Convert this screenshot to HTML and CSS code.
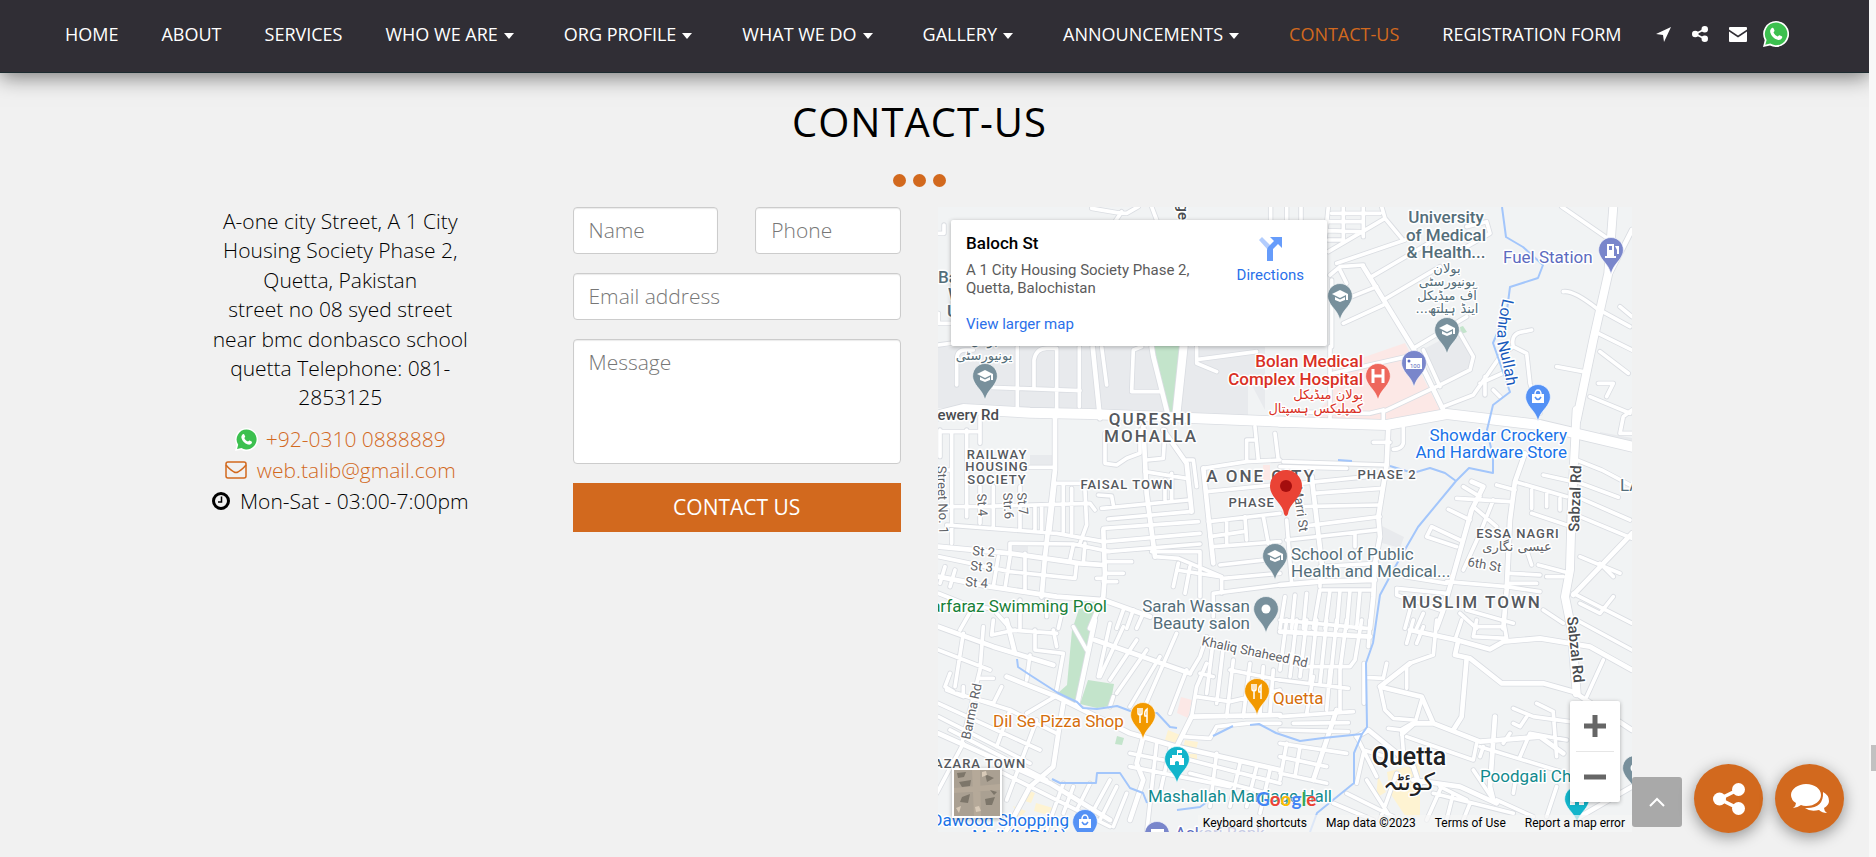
FILE: index.html
```html
<!DOCTYPE html>
<html lang="en">
<head>
<meta charset="utf-8">
<title>Contact-Us</title>
<link rel="stylesheet" href="styles.css">
</head>
<body>
<svg class="sprite" aria-hidden="true">
  <symbol id="whatsapp" viewBox="0 0 26 26">
    <path d="M13 0a13 13 0 1 1-6 24.500L0 26l1.700-6.800A13 13 0 0 1 13 0z" fill="#fff"/>
    <path d="M13 1.600a11.300 11.300 0 1 1-5.700 21l-5 1.200 1.300-4.900A11.300 11.300 0 0 1 13 1.600z" fill="#3cc04f"/>
    <path d="M8.800 7c.6-.5 1.400-.4 1.700.3l1 2.300c.2.600-.7 1.300-1 1.800.9 1.900 2.300 3.200 4.200 4 .6-.4 1.200-1.500 1.800-1.200l2.200 1.100c.7.300.6 1.100.3 1.700-.8 1.700-2.700 2.200-4.400 1.700-3.800-1.200-6.300-3.800-7.300-7.300C6.800 9.700 7.600 7.900 8.800 7z" fill="#fff"/>
  </symbol>
  <symbol id="share" viewBox="0 0 32 32">
    <path d="M25.500 6.500L6.500 16l19 9.500" fill="none" stroke="currentColor" stroke-width="3.600"/>
    <circle cx="25.500" cy="6.500" r="6.500" fill="currentColor"/><circle cx="6.500" cy="16" r="6.500" fill="currentColor"/><circle cx="25.500" cy="25.500" r="6.500" fill="currentColor"/>
  </symbol>
  <symbol id="cap" viewBox="-12 -12 24 24"><path d="M0-6L-8-2 0 2 6-1V4H8V-2zM-5 1V4L0 6 5 4V1L0 3.500z" fill="#fff"/></symbol>
  <symbol id="fork" viewBox="-12 -12 24 24"><path d="M-5-7V-2Q-5 0-3 0V8M-3-7V0M-1-7V-2Q-1 0-3 0M4 8V-6Q1-4 2 1H4" fill="none" stroke="#fff" stroke-width="1.500"/></symbol>
  <symbol id="bag" viewBox="-12 -12 24 24"><path d="M-6-3H6V6H-6z" fill="#fff"/><path d="M-3-3A3 4 0 0 1 3-3" fill="none" stroke="#fff" stroke-width="1.500"/><path d="M-3 0Q0 5 3 0" fill="none" stroke="#5491f5" stroke-width="1.500"/></symbol>
  <symbol id="fort" viewBox="-12 -12 24 24"><path d="M0-9H5V-6H1V-4H5V-1H7V6H2V3Q0 1-2 3V6H-7V-1H-5V-4H0z" fill="#fff"/></symbol>
  <symbol id="pin" viewBox="-14 -14 28 42"><path d="M0-12.500A12.500 12.500 0 0 1 12 3C9 12 3 13 0 24-3 13-9 12-12 3A12.500 12.500 0 0 1 0-12.500z" fill="currentColor" stroke="#fff" stroke-opacity=".6"/></symbol>
</svg>

<header class="topbar">
  <nav class="nav" aria-label="Main">
    <a href="#home">HOME</a>
    <a href="#about">ABOUT</a>
    <a href="#services">SERVICES</a>
    <a class="drop" href="#who">WHO WE ARE</a>
    <a class="drop" href="#profile">ORG PROFILE</a>
    <a class="drop" href="#what">WHAT WE DO</a>
    <a class="drop" href="#gallery">GALLERY</a>
    <a class="drop" href="#news">ANNOUNCEMENTS</a>
    <a class="active" href="#contact">CONTACT-US</a>
    <a href="#register">REGISTRATION FORM</a>
  </nav>
  <div class="quick">
    <a href="#map" aria-label="Location"><svg width="15" height="15" viewBox="0 0 15 15"><path d="M15 0L8 15 7 8 0 7z" fill="currentColor"/></svg></a>
    <a href="#share" aria-label="Share"><svg width="16" height="16"><use href="#share"/></svg></a>
    <a href="#mail" aria-label="Email"><svg width="18" height="15" viewBox="0 0 18 15"><path d="M1 0H17Q18 0 18 1V2.500L9 8.500 0 2.500V1Q0 0 1 0zM0 4.500L9 10.500 18 4.500V14Q18 15 17 15H1Q0 15 0 14z" fill="currentColor"/></svg></a>
    <a href="#wa" aria-label="WhatsApp"><svg width="26" height="26"><use href="#whatsapp"/></svg></a>
  </div>
</header>

<main class="contact" id="contact">
  <h1>CONTACT-US</h1>
  <div class="dots"><i></i><i></i><i></i></div>
  <div class="columns">
    <section class="details">
      <p>A-one city Street, A 1 City Housing Society Phase 2, Quetta, Pakistan<br>street no 08 syed street near bmc donbasco school quetta Telephone: 081-2853125</p>
      <ul>
        <li class="phone"><svg width="23" height="23"><use href="#whatsapp"/></svg><a href="#tel">+92-0310 0888889</a></li>
        <li class="mail"><svg width="22" height="18" viewBox="0 0 22 18"><rect x="1" y="1" width="20" height="16" rx="2" fill="none" stroke="currentColor" stroke-width="1.500"/><path d="M1 4Q3 7 9 11 11 12 13 11 19 7 21 4" fill="none" stroke="currentColor" stroke-width="1.500"/></svg><a href="#mail">web.talib@gmail.com</a></li>
        <li class="hours"><svg width="18" height="18" viewBox="0 0 18 18"><circle cx="9" cy="9" r="7.500" fill="none" stroke="currentColor" stroke-width="3"/><path d="M9.500 4.500V10H6" fill="none" stroke="currentColor" stroke-width="1.500"/></svg><span>Mon-Sat - 03:00-7:00pm</span></li>
      </ul>
    </section>

    <form class="form">
      <input type="text" placeholder="Name" aria-label="Name">
      <input type="tel" placeholder="Phone" aria-label="Phone">
      <input class="wide" type="email" placeholder="Email address" aria-label="Email address">
      <textarea class="wide" placeholder="Message" aria-label="Message"></textarea>
      <button class="wide" type="button">CONTACT US</button>
    </form>

    <section class="map" id="map" aria-label="Map">
      <svg class="canvas" viewBox="938 207 694 625">
        <defs>
          <g id="roads">
            <g transform="translate(930 200) scale(.3333)">
              <path class="r1" d="M485 25L560 38 590 40 625 20M575 35L545 80M665 20L680 60M1022 20V60M25 100H42V75M25 340V370H65M25 435L100 425M80 555V480Q80 450 105 450H130M262 440V630M312 560V480Q318 445 350 445H380V630M180 562L450 572M448 440V620M515 440L530 555M635 440L610 450 605 575H695M800 440V490L860 515M805 478L980 455"/>
              <path class="r2" d="M488 440L510 655M665 440L670 470 715 650"/>
              <path class="r3" d="M762 430L738 655"/>
            </g>
            <g transform="translate(1280 200) scale(.3333)">
              <path class="r1" d="M20 20V60M63 20V60M145 20L135 120M190 20V125M250 20V110M155 40H300M145 65H250M140 92L240 95M145 120H190M145 155L315 55 305 20M315 55L365 115M170 190L375 120M150 225L180 200 250 195M275 230L480 110M310 300L480 200M190 370L310 315M215 290L290 260M180 210L200 250M155 440V240M150 440V660M400 445L560 350M380 470L160 520M430 450L480 560M470 560L570 510 580 470 540 400M310 635L490 550M310 635V660M0 635L270 640 310 630M490 620L580 585 660 470 700 440 740 460 750 550 780 640M700 440Q690 400 730 395L755 390M690 510L600 550M615 585V530M640 570L660 590M560 80L620 65 630 100 560 140M845 20L990 120M850 275Q880 270 950 325L1050 380M1020 320L1056 350M955 400L1056 450M960 455L1045 520M830 500L910 515M955 550H1000L980 590M930 590L1050 640"/>
              <path class="r2" d="M250 200L400 445 490 630M1056 90L990 220"/>
              <path class="r3" d="M1000 20L985 220 940 420 890 660"/>
            </g>
            <g transform="translate(930 410) scale(.3333)">
              <path class="r1" d="M30 65H150V20M65 65V400M110 60V320M30 60V140M25 180H60M150 40V100M45 290H140L480 280 495 300M50 345L380 370 520 395M150 230V340M190 230V350M270 230V360M315 290V360M335 290V365M300 172H370M375 220H450M375 220L360 360M400 225V365M425 235V370M465 240L470 345 450 400M240 430V400L430 402 540 425M205 440L190 530M25 440L240 485 435 505 440 460M240 440L225 535M45 470L30 520M75 480L60 530M285 430V545M430 405L420 450M465 400L460 460 520 465M520 355L805 335M525 395L810 370M530 425L810 402M535 327L780 305M515 295L775 270M665 425L810 425V560M675 440L745 445 875 500M645 185L770 205M650 150L700 145 705 60M525 70V160L560 165 590 145 630 130V60M770 150L790 150 800 230M505 255L545 258 550 285M705 210V270M725 190V270M525 455H605M525 490H580M500 505H520M520 515H560M745 460L730 530M780 470L765 550M740 480L870 500M870 465L1050 445M880 505L1050 490M850 550L1050 525M875 500V550M850 550V620M820 175L950 155 1050 150M830 245L1030 225M835 335L1050 310M840 380L940 365M850 410L1050 395M890 330V400M945 320L950 390M1000 320L1015 400M975 50L985 150M950 150V90H975M1035 70L1045 150M580 600L560 655M610 600L590 655M640 610L620 655M25 550L100 580 200 600 360 580M130 590L90 660M200 610L240 655M270 570V655M350 620V570M385 655L400 590"/>
              <path class="r2" d="M375 20V180L345 440 335 560M25 410L240 430 450 460 520 465M25 500L180 530 380 560 520 570 660 620M520 360L525 490 520 560 480 655M640 50L650 250 675 440M700 60L770 160 785 305M820 175L850 460"/>
              <path class="r4" d="M-10 25L100 -3 300 8 480 12 1060 35"/>
            </g>
            <g transform="translate(1280 410) scale(.3333)">
              <path class="r1" d="M10 155L320 165M0 170L200 175M60 220L310 195M100 250L305 235M60 290L300 285M60 350L300 320M20 390L290 360M225 370V410M120 470L290 460M370 50V100Q365 118 340 118M280 97H330M120 540H280M120 540L100 655M150 540L135 655M180 540L170 655M210 540L200 655M240 540L230 655M120 500V530M20 330L35 520M15 560L0 655M45 555L35 655M80 550L70 655M0 630L260 655M705 215L860 260M650 225L705 240M755 240V295M800 250V290M840 265V300M790 195L880 215M755 310L860 345M890 150L965 180 1050 225M890 215L1015 262M890 260L1050 330M900 320L1056 385M550 230L600 260M530 265L690 275M505 298L570 330M580 290L650 350M540 390L455 350 440 380 530 410M640 270L600 370 550 480M375 500L500 520M500 550L350 535V555L480 600M500 515L680 530 780 545M690 490L780 495M690 520H770M740 420L755 465M775 465L870 490M800 500H850M900 580L960 610 1000 560M880 550L1056 640M900 440L1020 490M960 460L1000 500M790 600L850 640M390 600L375 655M430 610L410 655M540 610L590 655M560 600L700 640M1020 70L1030 20 1056 0M1020 70H1056"/>
              <path class="r2" d="M325 50L320 165 295 320 300 380 285 460 280 560 270 655M95 200L130 500M0 525L120 515 285 510M735 130L705 215 690 330 680 540 670 655M575 215L610 230 575 300 510 530 490 600 470 655M1056 370L880 555"/>
              <path class="r3" d="M890 0L875 300 870 480 855 560 875 660 890 850"/>
              <path class="r4" d="M0 35L320 45 500 12 780 45 1056 110"/>
            </g>
            <g transform="translate(930 620) scale(.3333)">
              <path class="r1" d="M100 40L75 200M25 90L180 150M190 0L185 45 255 30M240 30L380 40M315 30V90L400 100 380 210M300 105L290 180M160 20L150 150 95 370M50 210L100 230V200M60 160L45 200 70 215M150 175H190M150 240L190 250 215 200M375 230L290 280M80 220L240 270 380 340M25 250L330 390M25 290L300 430M60 330L350 480M100 370L20 520M320 300L230 540M370 30L380 80M240 270L200 380M430 20L470 90M540 10L505 170M580 20L510 170M620 60L540 180M650 90L560 220M690 110L600 260M740 40L640 270M770 150L720 280M550 230L540 260M810 160L850 170M780 160L810 110 830 50M850 60L830 220M880 80L860 250M900 150L1050 180M800 230L900 245 1050 210M910 120L890 290M960 130L940 290M1000 140L990 285M1030 150L1020 280M760 350L840 355 860 320 950 310H1050M680 370L650 640M720 385L690 520M600 400L700 420M600 440L900 500M860 400L840 560M930 430L900 560M980 440L950 560M1020 450L990 580M780 420L1050 490M780 460L1050 530M400 490L350 630M430 500L400 580M480 490L440 570M540 480L480 590M560 500L510 600M590 520L550 620M200 450L540 620M830 130L800 200 785 290"/>
              <path class="r2" d="M25 20L190 80 370 135M230 0L255 100M230 170L380 230 600 340 740 380 1050 450M25 340L180 410 360 490 540 600M400 250L385 340 370 440 300 500 230 630M495 0L440 260M495 60L780 160M740 380L785 290 1050 285M640 350L620 430 640 480 600 600"/>
            </g>
            <g transform="translate(1280 620) scale(.3333)">
              <path class="r1" d="M20 0L0 150M50 0L30 170M80 0L60 170M110 0L90 190M140 0L120 190M170 0L150 190M200 0L180 150M245 0L225 120 210 140 60 140M270 0L265 80M0 180L205 205M0 290L220 275M40 310L205 308M0 330L205 335M100 170L80 280M150 150L140 270M180 150V270M0 370L200 400M0 410L140 440M0 460L140 490M20 370L0 480M60 380L45 470M252 130V250M255 172L310 175 320 130M470 0L460 105 390 130M300 200L315 270 340 295 400 300M380 145V205M425 240L405 310 365 345M400 0L380 70M430 20L410 70M545 0L525 60M590 0L580 50 680 55 670 0M590 20H670M325 325L365 330 370 395M380 350L580 420 590 370M250 400L230 490M230 350L290 470M700 265L760 290 870 305M820 280L830 410M740 290L720 320 700 310M720 410L750 340 860 360M600 380L860 460M770 250L820 275M920 230L970 120M890 0L1056 90M460 520L700 580M580 450L640 540M480 500L560 540M650 540L760 590M830 500L800 590M200 520L340 590M160 550L280 600M260 480L330 590M350 460L300 600M250 390L350 420M610 380L600 410M690 340L670 370M480 510L440 600M520 520L500 600M570 550L550 600M710 460L700 520"/>
              <path class="r2" d="M0 35L270 50M170 270L100 480M390 130L300 200 425 230 460 310M390 30L530 60 630 88 670 65 780 55 930 80 1056 150M535 60L525 105 570 115 665 190 790 190 880 215 1056 330M560 115L545 290 520 330M365 330L400 310 460 310 600 365 780 350 850 400M645 290L630 500 640 540M230 350L265 330 400 440 420 500M400 480L540 500 650 550M1056 500L900 590"/>
            </g>
          </g>
          <path id="lohra" d="M1503 298Q1494 335 1499 350T1508 395"/>
        </defs>
        <rect x="938" y="207" width="694" height="625" fill="#f1f3f4"/>
        <g class="area-grey"><path d="M938 347H1265V410L1248 378V418L938 408zM1422 350L1456 332 1473 356 1470 372 1440 382zM1030 455H1052V465H1030zM1380 525L1404 537 1400 548 1382 543zM1013 545H1028V553H1013zM1600 432L1632 438V445L1600 436z"/></g>
        <g class="area-pink"><path d="M1330 369L1405 343 1440 410 1390 424 1310 420 1333 395zM1263 465H1270V480H1263zM1181 697L1192 700 1188 718 1177 713z"/></g>
        <g class="area-green"><path d="M1153 346H1180L1175 420 1166 412 1154 353zM1082 600H1101L1094 635 1077 704 1058 693 1067 685 1072 630zM1088 680L1114 684 1110 706 1097 708 1080 704zM1460 327L1463 326 1467 332 1461 334zM1117 736L1124 738 1122 745 1115 744z"/></g>
        <g class="area-yellow"><path d="M1168 730L1180 735 1177 743 1165 740zM1185 740L1198 742 1196 750 1183 748zM1187 754H1197V761H1188zM1027 790L1035 793 1031 803 1022 800zM1036 803L1053 808 1048 815 1034 811zM1013 806L1026 811 1020 818zM1387 772L1420 763V817H1406L1390 793zM1378 776L1386 792 1376 798z"/></g>
        <use href="#roads" class="casing"/>
        <use href="#roads" class="road"/>
        <g class="water">
          <path d="M1502 207L1506 237 1523 247 1543 265 1538 278 1510 287 1507 310 1493 343 1510 392 1493 405 1487 430 1493 457V473L1469 468 1456 481 1418 527 1395 567 1380 595 1373 643 1366 663 1367 727 1362 734 1354 753V783L1317 813 1310 832M1390 466L1413 473 1430 468 1445 473 1456 481M1338 460L1352 461"/>
          <path d="M1362 734L1323 738 1300 741 1276 733 1259 724 1250 725M1233 726L1213 736M1017 659L1018 667 1030 675 1058 693 1077 702 1083 708 1097 709 1117 706 1133 712 1157 713 1170 727 1177 728M1052 779L1060 783 1096 783 1097 773 1120 773 1130 788 1143 793 1147 803M1177 810L1200 807 1207 802"/>
        </g>

        <g class="lbl big slate mid"><text x="1446" y="223">University</text><text x="1446" y="241">of Medical</text><text x="1446" y="258">&amp; Health...</text></g>
        <g class="lbl urdu slate mid"><text x="1447" y="273">بولان</text><text x="1447" y="286">یونیورسٹی</text><text x="1447" y="300">آف میڈیکل</text><text x="1447" y="313" direction="rtl">اینڈ ہیلتھ...</text><text x="984" y="345">بولان</text><text x="984" y="360">یونیورسٹی</text></g>
        <g class="lbl big slate"><text x="938" y="283">Ba</text><text x="948" y="300">W</text><text x="947" y="317">U</text></g>
        <g class="lbl road-name end"><text transform="translate(1178 220) rotate(90)">Village</text></g>
        <g class="lbl indigo"><text x="1503" y="263">Fuel Station</text><text x="1175" y="839">Askari Bank</text></g>
        <g class="lbl big red end"><text x="1363" y="367">Bolan Medical</text><text x="1363" y="385">Complex Hospital</text></g>
        <g class="lbl urdu red end"><text x="1363" y="399">بولان میڈیکل</text><text x="1363" y="413">کمپلیکس ہسپتال</text></g>
        <text class="lbl lohra"><textPath href="#lohra">Lohra Nullah</textPath></text>
        <g class="lbl road-name"><text x="999" y="420" text-anchor="end">Brewery Rd</text><text transform="translate(1579 532) rotate(-88)">Sabzal Rd</text><text transform="translate(1567 617) rotate(84)">Sabzal Rd</text></g>
        <g class="lbl district large mid"><text x="1151" y="425">QURESHI</text><text x="1151" y="442">MOHALLA</text><text x="1472" y="608">MUSLIM TOWN</text><text x="1261" y="482">A ONE CITY</text></g>
        <g class="lbl district mid"><text x="997" y="459">RAILWAY</text><text x="997" y="471">HOUSING</text><text x="997" y="484">SOCIETY</text><text x="1127" y="489">FAISAL TOWN</text><text x="1387" y="479">PHASE 2</text><text x="1258" y="507">PHASE 1</text><text x="1518" y="538">ESSA NAGRI</text><text x="975" y="768">HAZARA TOWN</text></g>
        <g class="lbl urdu grey mid"><text x="1517" y="551">عیسی نگاری</text></g>
        <g class="lbl street"><text transform="translate(937 466) rotate(88)">Street No. 1</text><text transform="translate(977 494) rotate(86)">St 4</text><text transform="translate(1003 493) rotate(86)">Str.6</text><text transform="translate(1017 493) rotate(84)">St 7</text><text transform="translate(1293 487) rotate(82)">Marri St</text><text transform="translate(972 555) rotate(5)">St 2</text><text transform="translate(970 570) rotate(5)">St 3</text><text transform="translate(965 586) rotate(5)">St 4</text><text transform="translate(1467 566) rotate(10)">6th St</text><text transform="translate(1201 645) rotate(12)">Khaliq Shaheed Rd</text><text transform="translate(970 740) rotate(-78)">Barma Rd</text></g>
        <g class="lbl green end"><text x="1107" y="612">Sarfaraz Swimming Pool</text></g>
        <g class="lbl slate end"><text x="1250" y="612">Sarah Wassan</text><text x="1250" y="629">Beauty salon</text></g>
        <g class="lbl slate"><text x="1291" y="560">School of Public</text><text x="1291" y="577">Health and Medical...</text><text x="1620" y="491">LA</text></g>
        <g class="lbl blue end"><text x="1567" y="441">Showdar Crockery</text><text x="1567" y="458">And Hardware Store</text><text x="1069" y="826">Dawood Shopping</text><text x="1067" y="842">Mall (MPAA)</text></g>
        <g class="lbl orange"><text x="1273" y="704">Quetta</text><text x="993" y="727">Dil Se Pizza Shop</text></g>
        <g class="lbl teal"><text x="1148" y="802">Mashallah Marriage Hall</text><text x="1480" y="782">Poodgali Chowk</text></g>
        <g class="lbl city mid"><text x="1409" y="765">Quetta</text><text x="1409" y="790" class="city-ur">کوئٹہ</text></g>

        <g class="pin-slate">
          <use href="#pin" x="971" y="362" width="28" height="42"/><use href="#cap" x="973" y="364" width="24" height="24"/>
          <use href="#pin" x="1326" y="282" width="28" height="42"/><use href="#cap" x="1328" y="284" width="24" height="24"/>
          <use href="#pin" x="1433" y="316" width="28" height="42"/><use href="#cap" x="1435" y="318" width="24" height="24"/>
          <use href="#pin" x="1261" y="542" width="28" height="42"/><use href="#cap" x="1263" y="544" width="24" height="24"/>
          <use href="#pin" x="1252" y="595" width="28" height="42"/><circle cx="1266" cy="609" r="4.500" fill="#fff"/>
          <use href="#pin" x="1621" y="754" width="28" height="42"/><circle cx="1635" cy="768" r="4.500" fill="#fff"/>
        </g>
        <g class="pin-indigo">
          <use href="#pin" x="1597" y="236" width="28" height="42"/><path d="M1607 244H1614V256H1616V258H1605V256H1607zM1609 246V250H1612V246zM1615 246H1619V254H1617V250" fill="#fff" fill-rule="evenodd"/>
          <use href="#pin" x="1400" y="349" width="28" height="42"/><path d="M1406 358H1422V369H1406z" fill="#fff"/><circle cx="1409" cy="361" r="1.500"/><text x="1410" y="368" font-size="6">100</text>
          <use href="#pin" x="1143" y="820" width="28" height="42"/><path d="M1151 829H1164V837H1151z" fill="#fff"/>
        </g>
        <g class="pin-red"><use href="#pin" x="1364" y="362" width="28" height="42"/><path d="M1373 369V383M1383 369V383M1373 376H1383" stroke="#fff" stroke-width="3"/></g>
        <g class="pin-blue"><use href="#pin" x="1524" y="383" width="28" height="42"/><use href="#bag" x="1526" y="385" width="24" height="24"/><use href="#pin" x="1071" y="808" width="28" height="42"/><use href="#bag" x="1073" y="810" width="24" height="24"/></g>
        <g class="pin-orange"><use href="#pin" x="1129" y="701" width="28" height="42"/><use href="#fork" x="1131" y="703" width="24" height="24"/><use href="#pin" x="1243" y="677" width="28" height="42"/><use href="#fork" x="1245" y="679" width="24" height="24"/></g>
        <g class="pin-teal"><use href="#pin" x="1163" y="745" width="28" height="42"/><use href="#fort" x="1165" y="747" width="24" height="24"/><use href="#pin" x="1563" y="785" width="28" height="42"/><use href="#fort" x="1565" y="787" width="24" height="24"/></g>
        <path d="M1286 470A16 16 0 0 1 1302 486C1302 498 1289 503 1288 514Q1286 518 1284 514C1283 503 1270 498 1270 486A16 16 0 0 1 1286 470z" fill="#ea4335"/><circle cx="1286" cy="486" r="6" fill="#a50e0e"/>
      </svg>

      <div class="card">
        <div class="place"><strong>Baloch St</strong><p>A 1 City Housing Society Phase 2, Quetta, Balochistan</p><a href="#larger">View larger map</a></div>
        <a class="directions" href="#directions"><svg width="24" height="25" viewBox="0 0 24 25"><path d="M1 4L4 1 12 9 10 14z" fill="#b3cdfd"/><path d="M9 25V14Q9 12 11 10L16 5 12 1H24V12L20 8 15 13V25z" fill="#669cfb"/></svg><span>Directions</span></a>
      </div>
      <div class="zoom"><button type="button" aria-label="Zoom in"><svg width="22" height="22" viewBox="0 0 22 22"><path d="M0 11H22M11 0V22" stroke="#666" stroke-width="5"/></svg></button><button type="button" aria-label="Zoom out"><svg width="22" height="22" viewBox="0 0 22 22"><path d="M0 11H22" stroke="#666" stroke-width="5"/></svg></button></div>
      <button class="satellite" type="button" aria-label="Satellite view"><svg viewBox="0 0 46 46"><path d="M0 0H46V46H0z" fill="#aaa092"/><path d="M18 0H26L27 46H20zM0 18L46 14V20L0 23z" fill="#b5a999"/><path d="M3 3L12 2 10 7 4 8zM5 12L17 10 16 16 8 17zM8 27L16 24 14 33 6 32zM31 4L40 8 33 12zM31 29L41 27 38 35 32 35zM36 20L43 22 40 25z" fill="#7d766a"/><path d="M28 2L32 1 33 5 28 7zM21 37L25 36 27 41 22 42zM2 38L7 36 5 43z" fill="#d8cab8"/></svg></button>
      <div class="logo" aria-label="Google"><span class="g1">G</span><span class="g2">o</span><span class="g3">o</span><span class="g1">g</span><span class="g4">l</span><span class="g2">e</span></div>
      <div class="credits"><a href="#keys">Keyboard shortcuts</a><span>Map data ©2023</span><a href="#terms">Terms of Use</a><a href="#report">Report a map error</a></div>
    </section>
  </div>
</main>

<div class="floating">
  <button class="top" type="button" aria-label="Back to top"><svg width="16" height="10" viewBox="0 0 16 10"><path d="M1 9L8 2 15 9" fill="none" stroke="#fff" stroke-width="2"/></svg></button>
  <button class="round" type="button" aria-label="Share"><svg width="32" height="32"><use href="#share"/></svg></button>
  <button class="round" type="button" aria-label="Chat"><svg width="38" height="30" viewBox="0 0 38 30"><path d="M15 0C24 0 30 5 30 11S24 22 15 22Q12 22 10 21 6 24 2 24 5 22 5 19 0 16 0 11C0 5 7 0 15 0z" fill="currentColor"/><path d="M32 8Q38 11 38 17 38 21 33 24 33 27 36 29 31 29 28 26 19 28 14 24 33 25 32 8z" fill="currentColor"/></svg></button>
</div>
<div class="scroll"><i></i></div>
</body>
</html>
```
FILE: styles.css
```css
* { box-sizing: border-box; }
body { margin: 0; padding-right: 7px; background: #f1f1f1; color: #000; font-family: "Open Sans", sans-serif; font-size: 21px; overflow: hidden; }
a { text-decoration: none; color: inherit; }
button { font-family: inherit; border: 0; cursor: pointer; }
.sprite { position: absolute; width: 0; height: 0; }

.topbar { display: flex; align-items: center; height: 73px; padding: 0 65px 4px; background: #302e35; border-bottom: 1px solid #1c2b30; box-shadow: 0 4px 20px rgba(0, 0, 0, .5); color: #fff; font-size: 18px; }
.nav { display: flex; gap: 43px; white-space: nowrap; }
.drop { padding-right: 7px; }
.drop::after { content: ""; display: inline-block; margin-left: 6px; vertical-align: 2px; border: 5px solid transparent; border-top: 6px solid #fff; border-bottom: 0; }
.active { color: #d2691e; }
.quick { display: flex; align-items: center; gap: 21px; margin-left: 34px; }
.quick a { display: flex; }
.quick a:last-child { margin-left: -5px; }

.contact { padding: 23px 30px 24px 0; }
h1 { margin: 0; text-align: center; font-size: 40px; line-height: 52px; font-weight: 400; letter-spacing: 1px; }
.dots { display: flex; justify-content: center; gap: 7px; margin: 26px 0 20px; }
.dots i { width: 13px; height: 13px; border-radius: 50%; background: #d2691e; }
.columns { display: grid; grid-template-columns: repeat(4, 1fr); gap: 37px; max-width: 1425px; margin: 0 auto; align-items: start; }

.details { padding-right: 62px; text-align: center; font-weight: 300; line-height: 1.4; }
.details p { margin: 0; }
.details ul { margin: 11px 0 0; padding: 0; list-style: none; }
.details li { display: flex; align-items: center; justify-content: center; gap: 10px; line-height: 31px; white-space: nowrap; }
.details .phone { gap: 8px; }
.details a, .mail { color: #d2691e; }

.form { display: grid; grid-template-columns: 1fr 1fr; gap: 19px 37px; }
.wide { grid-column: 1 / -1; }
.form input, .form textarea { display: block; width: 100%; height: 47px; padding: 0 15px 2px; border: 1px solid #ccc; border-radius: 4px; background: #fff; box-shadow: inset 0 1px 1px rgba(0, 0, 0, .08); font-family: inherit; font-size: 21px; font-weight: 300; resize: none; }
.form textarea { height: 125px; padding-top: 8px; }
.form ::placeholder { color: #777; opacity: 1; }
.form button { height: 49px; padding-bottom: 2px; background: #d2691e; color: #fff; font-size: 21px; }

.map { position: relative; grid-column: span 2; overflow: hidden; font-family: Roboto, sans-serif; }
.canvas { display: block; width: 100%; }
.r1, .r2, .r3, .r4 { fill: none; stroke-linecap: round; stroke-linejoin: round; }
.r1 { stroke-width: calc(11px + var(--edge)); }
.r2 { stroke-width: calc(14px + var(--edge)); }
.r3 { stroke-width: calc(24px + var(--edge)); }
.r4 { stroke-width: calc(30px + var(--edge)); }
.casing { --edge: 5px; stroke: #dadde2; }
.road { --edge: 0px; stroke: #fff; }
.water { fill: none; stroke: #a3c6fb; stroke-width: 2px; stroke-linejoin: round; }
.area-grey { fill: #e8eaed; }
.area-pink { fill: #fce8e6; }
.area-green { fill: #c3e4cb; }
.area-yellow { fill: #fef3d2; }
.lbl { font-size: 17px; paint-order: stroke; stroke: #fff; stroke-width: 3px; stroke-linejoin: round; }
.big { font-weight: 500; }
.mid { text-anchor: middle; }
.end { text-anchor: end; }
.urdu { font-family: "DejaVu Sans", sans-serif; font-size: 13px; }
.slate { fill: #546e7a; }
.indigo { fill: #5c6bc0; }
.red { fill: #d93025; }
.green { fill: #188038; }
.blue { fill: #1a73e8; }
.orange { fill: #d56e0c; }
.teal { fill: #128a8e; }
.grey { fill: #5f6368; }
.lohra { fill: #185abc; font-size: 16px; }
.road-name { fill: #494c50; font-size: 15px; font-weight: 500; }
.district { fill: #55595e; font-size: 13px; font-weight: 500; letter-spacing: 1px; }
.large { font-size: 17px; letter-spacing: 2px; }
.street { fill: #5f6368; font-size: 13px; }
.city { fill: #202124; font-size: 25px; font-weight: 500; }
.city-ur { font-family: "DejaVu Sans", sans-serif; font-size: 24px; font-weight: 400; }
.pin-slate { color: #78909c; }
.pin-indigo { color: #7986cb; fill: #5c6bc0; }
.pin-red { color: #ee675c; }
.pin-blue { color: #5491f5; }
.pin-orange { color: #f29900; }
.pin-teal { color: #12b5cb; }

.card { position: absolute; left: 13px; top: 13px; display: flex; justify-content: space-between; width: 376px; padding: 12px 23px 13px 15px; border-radius: 2px; background: #fff; box-shadow: 0 1px 4px rgba(0, 0, 0, .3); font-size: 15px; line-height: 18px; }
.card strong { display: block; font-size: 17px; font-weight: 500; line-height: 22px; }
.place { width: 240px; }
.card p { margin: 7px 0 18px; color: #5b5b5b; }
.card a { color: #2a70ea; }
.directions { display: flex; flex-direction: column; align-items: center; gap: 5px; padding-top: 4px; }
.zoom { position: absolute; right: 12px; bottom: 30px; width: 50px; padding: 0 6px; border-radius: 2px; background: #fff; box-shadow: 0 1px 4px rgba(0, 0, 0, .3); }
.zoom button { display: flex; align-items: center; justify-content: center; width: 100%; height: 50px; padding: 0; background: none; }
.zoom button + button { border-top: 1px solid #e6e6e6; height: 51px; }
.satellite { position: absolute; left: 14px; bottom: 14px; width: 50px; height: 50px; padding: 2px; background: #fff; box-shadow: 0 1px 4px rgba(0, 0, 0, .3); }
.satellite svg { display: block; }
.logo { position: absolute; left: 318px; bottom: 21px; font-family: Lato, sans-serif; font-size: 19px; line-height: 24px; font-weight: 700; text-shadow: 0 0 2px #fff; }
.g1 { color: #4285f4; } .g2 { color: #ea4335; } .g3 { color: #fbbc04; } .g4 { color: #34a853; }
.credits { position: absolute; right: 0; bottom: 0; display: flex; gap: 19px; padding: 0 7px 0 5px; background: rgba(245, 245, 245, .7); font-size: 12px; line-height: 17px; white-space: nowrap; }

.floating { position: fixed; right: 32px; bottom: 24px; display: flex; align-items: flex-end; gap: 12px; }
.floating button { display: flex; align-items: center; justify-content: center; padding: 0; }
.top { width: 50px; height: 50px; margin-bottom: 6px; border-radius: 3px; background: #a9a9a9; }
.round { width: 69px; height: 69px; border-radius: 50%; background: #d2691e; color: #fff; box-shadow: 0 4px 15px rgba(0, 0, 0, .4); }
.scroll { position: fixed; top: 0; right: 0; bottom: 0; width: 7px; background: #f8f8f8; }
.scroll i { position: absolute; top: 745px; right: 0; width: 5px; height: 26px; background: #c1c1c1; }
```
